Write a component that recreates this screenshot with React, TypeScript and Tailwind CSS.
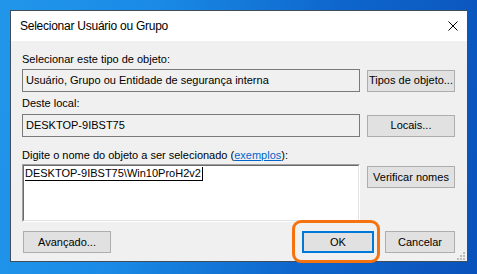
import React from "react";

function Btn({ label, w, focus = false, className = "" }: { label: string; w: string; focus?: boolean; className?: string }) {
  return (
    <div
      className={`${w} h-[22px] flex items-center justify-center bg-[#e1e1e1] text-[11px] leading-[13px] text-black ${
        focus ? "border-2 border-[#0078d7]" : "border border-[#adadad]"
      } ${className}`}
    >
      {label}
    </div>
  );
}

export default function App() {
  return (
    <div className="w-[477px] h-[274px] overflow-hidden relative bg-[linear-gradient(100deg,#2196ea_0%,#1a8ae6_30%,#0e66cc_65%,#0a52bb_100%)] font-['Liberation_Sans',Arial,sans-serif]">
      <div className="ml-[10px] mt-[10px] w-[458px] h-[252px] border border-[#3f4d5c] flex flex-col">
        {/* Title bar */}
        <div className="h-[30px] bg-white flex items-center justify-between pl-[9px] pr-[9px]">
          <span className="text-[12px] tracking-[-0.25px] text-black">Selecionar Usuário ou Grupo</span>
          <svg width="10" height="10" viewBox="0 0 10 10" className="block">
            <path d="M0.5 0.5 L9.5 9.5 M9.5 0.5 L0.5 9.5" stroke="#000" strokeWidth="1" />
          </svg>
        </div>
        {/* Body */}
        <div className="flex-1 bg-[#f0f0f0] relative pl-[11px] pr-[12px] text-[11px] leading-[13px] text-black">
          <div className="mt-[12px] h-[13px]">Selecionar este tipo de objeto:</div>
          <div className="mt-[3px] grid grid-cols-[338px_88px] gap-x-[7px] items-center">
            <div className="h-[23px] border border-[#7a7a7a] bg-[#f0f0f0] flex items-center pl-[3px]">
              Usuário, Grupo ou Entidade de segurança interna
            </div>
            <Btn label="Tipos de objeto..." w="w-[88px]" className="h-[21px]" />
          </div>
          <div className="mt-[5px] h-[13px]">Deste local:</div>
          <div className="mt-[4px] grid grid-cols-[338px_88px] gap-x-[7px] items-center">
            <div className="h-[23px] border border-[#7a7a7a] bg-[#f0f0f0] flex items-center pl-[3px]">DESKTOP-9IBST75</div>
            <Btn label="Locais..." w="w-[88px]" className="h-[21px]" />
          </div>
          <div className="mt-[12px] h-[13px]">
            Digite o nome do objeto a ser selecionado (
            <span className="text-[#0066cc] underline underline-offset-[1px]">exemplos</span>
            ):
          </div>
          <div className="mt-[2px] grid grid-cols-[338px_88px] gap-x-[7px] items-start">
            <div className="h-[58px] bg-white border border-t-[#a0a0a0] border-l-[#a0a0a0] border-r-white border-b-white">
              <div className="h-full border border-t-[#696969] border-l-[#696969] border-r-[#e3e3e3] border-b-[#e3e3e3] pt-[1px] pl-[1px]">
                <span className="inline-block h-[14px] border-b border-r border-black leading-[13px] pr-[1px]">
                  DESKTOP-9IBST75\Win10ProH2v2
                </span>
              </div>
            </div>
            <Btn label="Verificar nomes" w="w-[88px]" className="mt-[2px]" />
          </div>
          <div className="mt-[9px] flex justify-between">
            <Btn label="Avançado..." w="w-[88px]" className="ml-[1px]" />
            <div className="flex gap-[11px]">
              <Btn label="OK" w="w-[72px]" focus />
              <Btn label="Cancelar" w="w-[70px]" />
            </div>
          </div>
          {/* size grip */}
          <svg width="10" height="10" viewBox="0 0 10 10" className="absolute right-[1px] bottom-[0px]">
            <rect x="7" y="1" width="2" height="2" fill="#bcbcbc" />
            <rect x="4" y="4" width="2" height="2" fill="#bcbcbc" />
            <rect x="7" y="4" width="2" height="2" fill="#bcbcbc" />
            <rect x="1" y="7" width="2" height="2" fill="#bcbcbc" />
            <rect x="4" y="7" width="2" height="2" fill="#bcbcbc" />
            <rect x="7" y="7" width="2" height="2" fill="#bcbcbc" />
          </svg>
        </div>
      </div>
      {/* orange highlight around OK */}
      <div className="absolute left-[292px] top-[220px] w-[88px] h-[43px] rounded-[9px] border-[3px] border-[#f5730f]" />
    </div>
  );
}
